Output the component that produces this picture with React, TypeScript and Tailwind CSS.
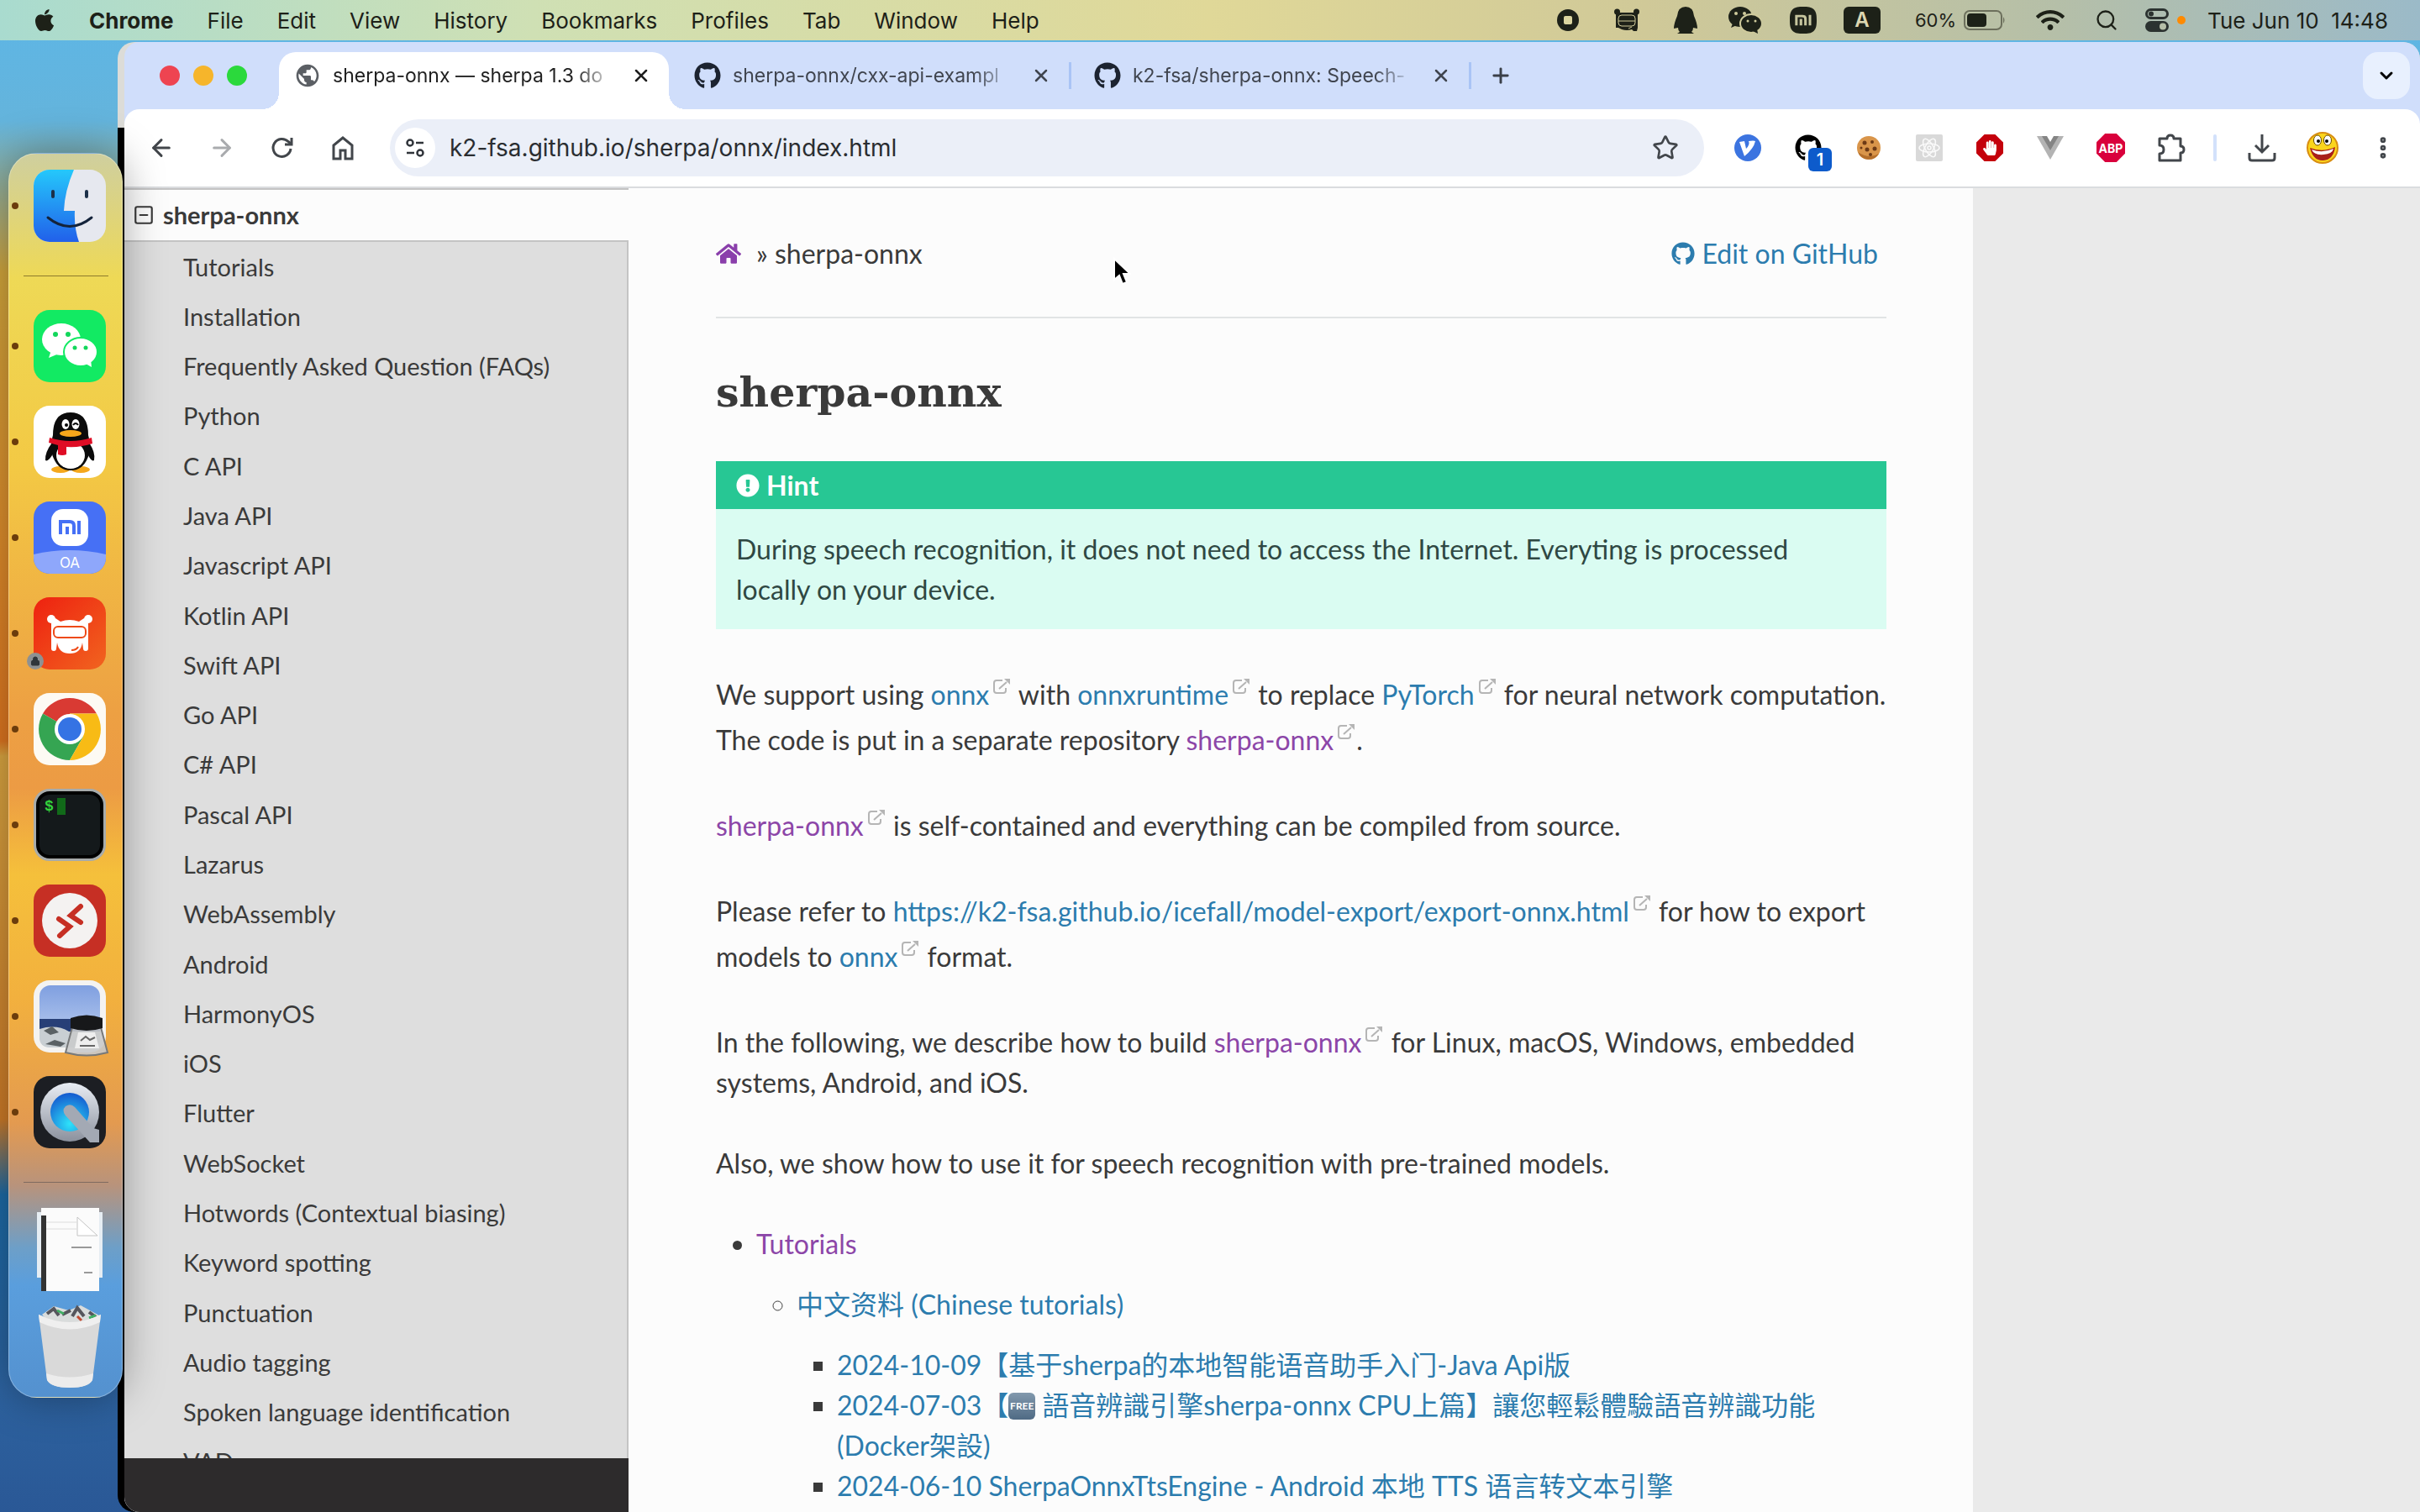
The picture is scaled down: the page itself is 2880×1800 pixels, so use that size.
import type { ReactNode } from "react";
import {
    FaApple,
    FaExclamationCircle,
    FaGithub,
    FaHandPaper,
    FaHome,
    FaWifi,
} from "react-icons/fa";
import { MdPublic } from "react-icons/md";
import { SiXiaomi } from "react-icons/si";
import {
    ArrowLeft,
    ArrowRight,
    ChevronDown,
    EllipsisVertical,
    House,
    Lock,
    Plus,
    Search,
    SquareMinus,
    Star,
    X,
} from "lucide-react";

const menus = ["File", "Edit", "View", "History", "Bookmarks", "Profiles", "Tab", "Window", "Help"];

const sections = [
    "Tutorials",
    "Installation",
    "Frequently Asked Question (FAQs)",
    "Python",
    "C API",
    "Java API",
    "Javascript API",
    "Kotlin API",
    "Swift API",
    "Go API",
    "C# API",
    "Pascal API",
    "Lazarus",
    "WebAssembly",
    "Android",
    "HarmonyOS",
    "iOS",
    "Flutter",
    "WebSocket",
    "Hotwords (Contextual biasing)",
    "Keyword spotting",
    "Punctuation",
    "Audio tagging",
    "Spoken language identification",
    "VAD",
];

const StatusCell = ({ children }: { children: ReactNode }) => (
    <span className="flex w-[70px] justify-center">{children}</span>
);

const MenuBar = () => (
    <header className="flex h-12 shrink-0 items-center bg-[linear-gradient(90deg,#a9dbcf_0%,#cfe0b4_22%,#e0d898_50%,#d0c998_68%,#b5bfa8_85%,#9bbac8_100%)] pl-[38px] pr-[38px] text-[26px] text-[#1d2118]">
        <FaApple className="mr-[38px] size-[30px]" />
        <nav className="flex gap-10">
            <button className="font-bold">Chrome</button>
            {menus.map((menu) => (
                <button key={menu}>{menu}</button>
            ))}
        </nav>
        <div className="ml-auto flex items-center">
            <StatusCell>
                <svg viewBox="0 0 26 26" className="size-[26px]">
                    <circle cx="13" cy="13" r="13" fill="#1d2118" />
                    <rect x="8" y="8" width="10" height="10" rx="2" fill="#dcd6a0" />
                </svg>
            </StatusCell>
            <StatusCell>
                <svg viewBox="0 0 30 28" className="h-7 w-[30px]">
                    <circle cx="3.500" cy="4" r="3.500" fill="#1d2118" />
                    <circle cx="26.500" cy="4" r="3.500" fill="#1d2118" />
                    <path d="M2 5h26v18l-1 4h-4l-2-2q-6 2-12 0l-4-2H2z" fill="#1d2118" />
                    <rect x="5" y="8" width="20" height="13" rx="4" fill="#1d2118" stroke="#cfca98" />
                    <path d="M5 15h20M17 24l4-2" stroke="#cfca98" />
                    <path d="M7 1q8 4 16 0v2H7z" fill="#d5cf98" />
                </svg>
            </StatusCell>
            <StatusCell>
                <svg viewBox="0 0 28 32" className="h-8 w-7">
                    <path d="M14 0q9 0 10 11 4 9 4 15l-5-1q0 3-2 5l3 2H4l3-2q-2-2-2-5l-5 1q0-6 4-15Q5 0 14 0z" fill="#1d2118" />
                </svg>
            </StatusCell>
            <StatusCell>
                <svg viewBox="0 0 40 32" className="h-8 w-10">
                    <ellipse cx="15" cy="12" rx="14" ry="12" fill="#1d2118" />
                    <path d="M6 20l-2 5 7-3z" fill="#1d2118" />
                    <ellipse cx="28" cy="20" rx="13" ry="11" fill="#1d2118" stroke="#cfca9c" strokeWidth="2" />
                    <path d="M30 29l6 3-1-6z" fill="#1d2118" />
                    <g fill="#cfca9c">
                        <circle cx="10" cy="8" r="2" />
                        <circle cx="20" cy="8" r="2" />
                        <circle cx="24" cy="17" r="1.500" />
                        <circle cx="33" cy="17" r="1.500" />
                    </g>
                </svg>
            </StatusCell>
            <StatusCell>
                <SiXiaomi className="size-8" />
            </StatusCell>
            <StatusCell>
                <span className="flex h-8 w-11 items-center justify-center rounded-md bg-[#1d2118] text-[24px] font-semibold text-[#dcd6b0]">A</span>
            </StatusCell>
            <span className="ml-7 mr-[9px] text-[22px]">60%</span>
            <svg viewBox="0 0 50 24" className="mr-9 h-6 w-[50px]">
                <rect x="1" y="1" width="44" height="22" rx="6" fill="none" stroke="#6c6f5c" strokeWidth="2" />
                <rect x="4" y="4" width="23" height="16" rx="4" fill="#1d2118" />
                <path d="M47 8q3 4 0 8z" fill="#6c6f5c" />
            </svg>
            <FaWifi className="mr-9 size-[34px]" />
            <Search className="mr-8 size-7" />
            <svg viewBox="0 0 28 28" className="mr-2.5 size-7">
                <rect x="1.500" y="1.500" width="25" height="10" rx="5" fill="none" stroke="#2b3230" strokeWidth="3" />
                <circle cx="7" cy="6.500" r="3" fill="#2b3230" />
                <rect x="0" y="15" width="28" height="13" rx="6.500" fill="#2b3230" />
                <circle cx="21" cy="21.500" r="4" fill="#b5bfa8" />
            </svg>
            <span className="mr-[26px] size-2.5 rounded-full bg-[#ff8a00]" />
            <time className="whitespace-pre">Tue Jun 10  14:48</time>
        </div>
    </header>
);

const FinderIcon = () => (
    <svg viewBox="0 0 86 86" className="size-full">
        <defs>
            <linearGradient id="finder" x1="0" y1="0" x2="0" y2="1">
                <stop offset="0" stopColor="#25c8fb" />
                <stop offset="1" stopColor="#2160ea" />
            </linearGradient>
            <clipPath id="tile">
                <rect width="86" height="86" rx="19" />
            </clipPath>
        </defs>
        <g clipPath="url(#tile)">
            <rect width="86" height="86" fill="#e6e8ef" />
            <path d="M0 0h48Q37 25 36 49h13q-1 20 5 37H0z" fill="url(#finder)" />
        </g>
        <path d="M23 26v6M63 26v6" stroke="#1c3049" strokeWidth="4" strokeLinecap="round" />
        <path d="M17 57q26 21 52 0" fill="none" stroke="#14233a" strokeWidth="3" strokeLinecap="round" />
    </svg>
);

const WeChatIcon = () => (
    <svg viewBox="0 0 86 86" className="size-full">
        <rect width="86" height="86" rx="19" fill="#12ea63" />
        <ellipse cx="33" cy="35" rx="23" ry="19" fill="#fff" />
        <path d="M21 48l-3 9 12-5z" fill="#fff" />
        <ellipse cx="56" cy="50" rx="20" ry="17" fill="#fff" stroke="#12ea63" strokeWidth="2" />
        <path d="M62 64l7 4-1-9z" fill="#fff" />
        <g fill="#12d75b">
            <circle cx="26" cy="29" r="3" />
            <circle cx="41" cy="29" r="3" />
            <circle cx="49" cy="45" r="2.500" />
            <circle cx="62" cy="45" r="2.500" />
        </g>
    </svg>
);

const QQIcon = () => (
    <svg viewBox="0 0 86 86" className="size-full">
        <rect width="86" height="86" rx="19" fill="#fff" />
        <ellipse cx="32" cy="76" rx="11" ry="4" fill="#f5a81c" />
        <ellipse cx="56" cy="76" rx="11" ry="4" fill="#f5a81c" />
        <path d="M22 44Q13 56 14 65q3 2 8-6zM66 44q8 12 6 21-3 2-7-6z" fill="#0b0b0b" />
        <path d="M44 8q21 0 21 27 5 16-1 28-6 14-20 14T24 63q-6-12-1-28Q23 8 44 8z" fill="#0b0b0b" />
        <ellipse cx="44" cy="59" rx="17" ry="16" fill="#fff" />
        <ellipse cx="38" cy="22" rx="4.500" ry="6" fill="#fff" />
        <ellipse cx="50" cy="22" rx="4.500" ry="6" fill="#fff" />
        <circle cx="39" cy="23" r="2" />
        <path d="M47 23q3-4 6 0" fill="none" stroke="#0b0b0b" strokeWidth="2" />
        <ellipse cx="44" cy="33" rx="13" ry="4" fill="#f7a71b" />
        <path d="M19 38q25 8 50 0l1 7q-14 5-31 4v9q-5 2-10 0v-11l-11-3z" fill="#df0d25" />
    </svg>
);

const MiOfficeIcon = () => (
    <span className="relative flex size-full flex-col items-center overflow-hidden rounded-[19px] bg-[#4670f5] pt-[9px]">
        <svg viewBox="0 0 86 28" className="absolute inset-x-0 bottom-0">
            <path d="M0 5q43-10 86 0v23H0z" fill="#8ea7fb" />
        </svg>
        <svg viewBox="0 0 44 44" className="size-[44px] shrink-0">
            <rect width="44" height="44" rx="14" fill="#fff" />
            <path d="M11 30V15h11q5 0 5 5v10M19 21v9M33 14v16" fill="none" stroke="#4670f5" strokeWidth="4" />
        </svg>
        <span className="relative mt-3 text-[17px] leading-4 text-white">OA</span>
    </span>
);

const MituIcon = () => (
    <svg viewBox="0 0 86 86" className="size-full">
        <defs>
            <linearGradient id="mitu" x1="0" y1="0" x2="1" y2="1">
                <stop offset="0" stopColor="#ee2110" />
                <stop offset="1" stopColor="#f1641f" />
            </linearGradient>
        </defs>
        <rect width="86" height="86" rx="19" fill="url(#mitu)" />
        <circle cx="21" cy="26" r="5" fill="#fff" />
        <circle cx="65" cy="26" r="5" fill="#fff" />
        <path d="M21 31l5-6 6 4q11-4 22 0l6-4 5 6v30q0 3-3 3t-3-3l-1-7q-2 13-15 13T28 54l-1 7q0 3-3 3t-3-3z" fill="#fff" />
        <rect x="24" y="35" width="38" height="13" rx="5" fill="#fff" stroke="#ee4a17" strokeWidth="2" />
        <path d="M45 63q6 0 8-4" fill="none" stroke="#ee4a17" strokeWidth="2" />
    </svg>
);

const ChromeIcon = () => (
    <svg viewBox="0 0 86 86" className="size-full">
        <rect width="86" height="86" rx="19" fill="#fdfaf3" />
        <path d="M43 43L11 24.500A37 37 0 0 1 75 24.500H43z" fill="#d93a33" />
        <path d="M43 43L11 24.500A37 37 0 0 0 43 80L59 52z" fill="#35a552" />
        <path d="M43 43l16 9L43 80A37 37 0 0 0 75 24.500H43z" fill="#f8bb15" />
        <circle cx="43" cy="43" r="18" fill="#fff" />
        <circle cx="43" cy="43" r="14" fill="#3573e4" />
    </svg>
);

const TerminalIcon = () => (
    <span className="flex size-full gap-1 rounded-[19px] border-[3px] border-[#a7abab] bg-[#14191b] pl-2.5 pt-2 font-['Liberation_Mono',monospace] text-[18px] font-bold leading-5 text-[#33d33c] shadow-[inset_0_0_0_4px_#000]">
        $<span className="h-5 w-2.5 bg-[#116a19]" />
    </span>
);

const RemoteIcon = () => (
    <svg viewBox="0 0 86 86" className="size-full">
        <rect width="86" height="86" rx="19" fill="#c62f24" />
        <circle cx="43" cy="43" r="33" fill="#f4f2f1" />
        <path d="M30 41l13 9-12 11M56 26L44 37l12 8" fill="none" stroke="#c62f24" strokeWidth="6" strokeLinecap="round" />
    </svg>
);

const PreviewIcon = () => (
    <svg viewBox="0 0 86 86" className="size-full overflow-visible">
        <defs>
            <linearGradient id="sky" x1="0" y1="0" x2="0" y2="1">
                <stop offset="0" stopColor="#7f9fe0" />
                <stop offset="1" stopColor="#c3d4f2" />
            </linearGradient>
        </defs>
        <rect width="86" height="86" rx="19" fill="#f4f3f1" />
        <rect x="7" y="6" width="72" height="74" rx="13" fill="url(#sky)" />
        <path d="M7 46h72v15H7z" fill="#273f77" />
        <path d="M7 58q20-6 35 3h37v8q0 11-13 11H20Q7 80 7 68z" fill="#c9cfd3" />
        <path d="M12 60l10-5 8 7-10 3zM14 76l11-5 13 4-6 4z" fill="#5a6164" />
        <path d="M46 56l-8 30q25 7 50 0l-8-30z" fill="#c9cacb" fillOpacity="0.900" stroke="#77797a" strokeWidth="2" />
        <path d="M53 62h20l5 19H49z" fill="#eee" />
        <path d="M56 72l6-5 5 4 6-3M55 78h18" stroke="#666" strokeWidth="2" fill="none" />
        <path d="M44 45q19-7 38 0v12q-19 6-38 0z" fill="#17181a" />
    </svg>
);

const QuickTimeIcon = () => (
    <svg viewBox="0 0 86 86" className="size-full">
        <defs>
            <linearGradient id="ring" x1="0" y1="0" x2="0" y2="1">
                <stop offset="0" stopColor="#e9edf4" />
                <stop offset="1" stopColor="#8b919d" />
            </linearGradient>
            <radialGradient id="glow" cx="0.500" cy="0.800" r="0.800">
                <stop offset="0" stopColor="#2ee3fa" />
                <stop offset="1" stopColor="#1459cf" />
            </radialGradient>
        </defs>
        <rect width="86" height="86" rx="19" fill="#1c1e23" />
        <circle cx="43" cy="43" r="35" fill="url(#ring)" />
        <circle cx="43" cy="43" r="23" fill="url(#glow)" />
        <path d="M38 36q6-4 11 1l22 25 7 2v15H67L38 47q-5-6 0-11z" fill="#a3a9b4" />
    </svg>
);

const DocumentsIcon = () => (
    <svg viewBox="0 0 86 100" className="h-[100px] w-[86px]">
        <path d="M4 6h78v78H4z" fill="#e6edf3" />
        <path d="M9 1h69v99H9z" fill="#fbfbfb" />
        <path d="M9 10h6v90H9z" fill="#333" />
        <path d="M52 12v22h24z" fill="#fff" stroke="#c4c4c4" />
        <path d="M15 18h36M15 26h36" stroke="#dcdcdc" />
        <path d="M45 48h24M60 78h10" stroke="#9a9a9a" strokeWidth="2" />
    </svg>
);

const TrashIcon = () => (
    <svg viewBox="0 0 86 100" className="h-[100px] w-[86px]">
        <path d="M10 12l14-10 18 5 14-6 22 12-10 10H20z" fill="#d9dcdc" />
        <path d="M16 11l8-6 6 8M34 12l10-5M46 14l6-10 8 10M66 9l8 6" stroke="#55555c" strokeWidth="4" fill="none" />
        <path d="M28 7l8 4M66 16l8-3" stroke="#3fae63" strokeWidth="3" />
        <path d="M52 14l5 5" stroke="#c24a31" strokeWidth="3" />
        <path d="M6 12q37 18 74 0l-10 78q-5 9-27 9t-27-9z" fill="#d9d9d9" />
        <path d="M6 12q37 18 74 0l-1 9q-36 17-72 0z" fill="#efefef" />
        <path d="M15 82q28 9 56 0l-1 8q-5 9-27 9t-27-9z" fill="#ececec" />
    </svg>
);

const dockApps = [
    { name: "WeChat", icon: <WeChatIcon /> },
    { name: "QQ", icon: <QQIcon /> },
    { name: "Mi Office", icon: <MiOfficeIcon /> },
    { name: "Mitu", icon: <MituIcon />, locked: true },
    { name: "Chrome", icon: <ChromeIcon /> },
    { name: "Terminal", icon: <TerminalIcon /> },
    { name: "Remote Desktop", icon: <RemoteIcon /> },
    { name: "Preview", icon: <PreviewIcon /> },
    { name: "QuickTime", icon: <QuickTimeIcon /> },
];

const DockApp = ({ name, icon, locked }: { name: string; icon: ReactNode; locked?: boolean }) => (
    <button aria-label={name} className="flex items-center gap-[18px]">
        <span className="size-2 rounded-full bg-[#6b3c0c]" />
        <span className="relative size-[86px]">
            {icon}
            {locked && (
                <span className="absolute -left-2 bottom-0 flex size-5 items-center justify-center rounded-full bg-[#8e9192] text-[#30363a]">
                    <Lock className="size-3" fill="currentColor" />
                </span>
            )}
        </span>
    </button>
);

const Dock = () => (
    <aside className="relative z-10 ml-2.5 mt-[134px] flex h-[1482px] w-[136px] flex-col items-start rounded-[34px] border border-white/30 bg-[linear-gradient(180deg,#cfcf9f_0%,#eed956_10%,#f3c944_25%,#eda043_45%,#ec9b44_51%,#f5c03b_58%,#f2b03e_68%,#e39a50_78%,#b8937c_83%,#6d9fc8_88%,#5a9edd_91%,#5491cf_100%)] pl-[3px] pt-[19px] shadow-[0_0_50px_rgba(0,0,0,0.35)]">
        <DockApp name="Finder" icon={<FinderIcon />} />
        <hr className="my-10 ml-3.5 w-[101px] border-[#8d7b2c]" />
        <div className="flex flex-col gap-7">
            {dockApps.map((app) => (
                <DockApp key={app.name} {...app} />
            ))}
        </div>
        <hr className="my-10 ml-3.5 mb-[29px] w-[101px] border-[#7f6b60]" />
        <button aria-label="Documents" className="ml-[26px]">
            <DocumentsIcon />
        </button>
        <button aria-label="Trash" className="ml-[26px] mt-4">
            <TrashIcon />
        </button>
    </aside>
);

const Tab = ({ title, icon, active }: { title: string; icon: ReactNode; active?: boolean }) => (
    <div
        className={
            active
                ? "relative flex h-[68px] w-[464px] items-center rounded-t-[20px] bg-white pb-3 pl-[18px] pr-[21px] text-[#1f1f1f]"
                : "flex h-[68px] w-[464px] items-center pb-3 pl-[18px] pr-[21px] text-[#40454f]"
        }
    >
        {active && (
            <>
                <span className="absolute -left-5 bottom-0 size-5 bg-[radial-gradient(circle_at_0_0,transparent_20px,white_20px)]" />
                <span className="absolute -right-5 bottom-0 size-5 bg-[radial-gradient(circle_at_100%_0,transparent_20px,white_20px)]" />
            </>
        )}
        <span className="mr-3.5 size-8">{icon}</span>
        <span className="min-w-0 flex-1 whitespace-nowrap [mask-image:linear-gradient(90deg,black_86%,transparent_100%)]">
            {title}
        </span>
        <button aria-label="Close tab" className="ml-5">
            <X className="size-6" strokeWidth={2.5} />
        </button>
    </div>
);

const TabStrip = () => (
    <div className="flex h-20 items-end text-[23px]">
        <div className="flex gap-4 self-center pl-[42px] pr-[38px]">
            <button aria-label="Close" className="size-6 rounded-full bg-[#ee4451]" />
            <button aria-label="Minimize" className="size-6 rounded-full bg-[#f6b52b]" />
            <button aria-label="Zoom" className="size-6 rounded-full bg-[#2bd93c]" />
        </div>
        <Tab active title="sherpa-onnx — sherpa 1.3 do" icon={<MdPublic className="size-8 text-[#5b5f64]" />} />
        <span className="w-3" />
        <Tab title="sherpa-onnx/cxx-api-exampl" icon={<FaGithub className="size-8 text-[#1c2330]" />} />
        <span className="mb-6 h-8 w-3 border-l-[3px] border-[#a9c4f5]" />
        <Tab title="k2-fsa/sherpa-onnx: Speech-" icon={<FaGithub className="size-8 text-[#1c2330]" />} />
        <span className="mb-6 h-8 w-6 border-l-[3px] border-[#a9c4f5]" />
        <button aria-label="New tab" className="mb-[26px] text-[#3a3f48]">
            <Plus className="size-7" strokeWidth={2.5} />
        </button>
        <button aria-label="Search tabs" className="mb-3 ml-auto mr-3 flex size-14 items-center justify-center rounded-[18px] bg-[#e8f0fe]">
            <ChevronDown className="size-6" strokeWidth={3} />
        </button>
    </div>
);

const ToolButton = ({ label, children }: { label: string; children: ReactNode }) => (
    <button aria-label={label} className="flex w-[72px] shrink-0 justify-center text-[#42464b]">
        {children}
    </button>
);

const Toolbar = () => (
    <div className="flex h-[94px] items-center rounded-t-[18px] border-b-2 border-[#dadcdf] bg-white px-2">
        <ToolButton label="Back">
            <ArrowLeft className="size-8" strokeWidth={2.25} />
        </ToolButton>
        <ToolButton label="Forward">
            <ArrowRight className="size-8 text-[#a9abae]" strokeWidth={2.25} />
        </ToolButton>
        <ToolButton label="Reload">
            <svg viewBox="0 0 28 28" className="size-7" fill="none" stroke="currentColor" strokeWidth="3">
                <path d="M24 15a10.500 10.500 0 1 1-3-8.500L24 9" />
                <path d="M25 2v8h-8" />
            </svg>
        </ToolButton>
        <ToolButton label="Home">
            <svg viewBox="0 0 28 30" className="h-[30px] w-7" fill="none" stroke="currentColor" strokeWidth="3">
                <path d="M3 28V12l11-9 11 9v16h-8V18h-6v10z" />
            </svg>
        </ToolButton>
        <form className="ml-5 mr-4 flex h-[68px] flex-1 items-center rounded-full bg-[#ebeff8] pl-1.5">
            <button type="button" aria-label="Site information" className="mr-[17px] flex size-12 items-center justify-center rounded-full bg-white">
                <svg viewBox="0 0 24 24" className="size-6" fill="none" stroke="#30343a" strokeWidth="2.500">
                    <circle cx="6" cy="6" r="3.500" />
                    <path d="M13 6h9M2 18h9" />
                    <circle cx="18" cy="18" r="3.500" />
                </svg>
            </button>
            <input
                aria-label="Address"
                defaultValue="k2-fsa.github.io/sherpa/onnx/index.html"
                className="min-w-0 flex-1 bg-transparent text-[28px] text-[#2a2d31] outline-none"
            />
            <button type="button" aria-label="Bookmark" className="mr-[30px] text-[#42464b]">
                <Star className="size-8" />
            </button>
        </form>
        <ToolButton label="V extension">
            <svg viewBox="0 0 32 32" className="size-8">
                <circle cx="16" cy="16" r="16" fill="#3c74e0" />
                <path d="M6 9l6-1 2 9q5-5 3-9 6-1 8 0-2 9-13 18z" fill="#fff" />
            </svg>
        </ToolButton>
        <ToolButton label="GitHub notifications">
            <span className="relative">
                <FaGithub className="size-8 text-black" />
                <span className="absolute -bottom-3 -right-3 flex size-7 items-center justify-center rounded-md bg-[#0d5bcb] text-[20px] font-semibold text-white">
                    1
                </span>
            </span>
        </ToolButton>
        <ToolButton label="Cookies">
            <svg viewBox="0 0 30 30" className="size-[30px]">
                <circle cx="15" cy="15" r="14" fill="#d9954a" />
                <path d="M2 20a14 14 0 0 0 25 2q-12 7-25-2z" fill="#b56f2b" />
                <g fill="#6c3a16">
                    <circle cx="10" cy="9" r="2.500" />
                    <circle cx="19" cy="8" r="2" />
                    <circle cx="22" cy="16" r="2.500" />
                    <circle cx="13" cy="17" r="2.500" />
                    <circle cx="6" cy="15" r="1.500" />
                    <circle cx="17" cy="23" r="2" />
                </g>
            </svg>
        </ToolButton>
        <ToolButton label="React tools">
            <svg viewBox="0 0 32 32" className="size-8" fill="none" stroke="#fafafa" strokeWidth="1.500">
                <rect width="32" height="32" rx="2" fill="#d9d9d9" stroke="none" />
                <ellipse cx="16" cy="16" rx="12" ry="5" />
                <ellipse cx="16" cy="16" rx="12" ry="5" transform="rotate(60 16 16)" />
                <ellipse cx="16" cy="16" rx="12" ry="5" transform="rotate(120 16 16)" />
                <circle cx="16" cy="16" r="2" />
            </svg>
        </ToolButton>
        <ToolButton label="AdBlock">
            <span className="flex size-8 items-center justify-center bg-[#c4000c] [clip-path:polygon(30%_0,70%_0,100%_30%,100%_70%,70%_100%,30%_100%,0_70%,0_30%)]">
                <FaHandPaper className="size-[18px] text-white" />
            </span>
        </ToolButton>
        <ToolButton label="Vue tools">
            <svg viewBox="0 0 32 28" className="h-7 w-8">
                <path d="M0 0h32L16 28z" fill="#b3b3b3" />
                <path d="M6 0h20L16 17z" fill="#848484" />
                <path d="M12 0h8l-4 7z" fill="#fff" />
            </svg>
        </ToolButton>
        <ToolButton label="Adblock Plus">
            <span className="flex size-[34px] items-center justify-center bg-[#d9003c] text-[14px] font-bold text-white [clip-path:polygon(30%_0,70%_0,100%_30%,100%_70%,70%_100%,30%_100%,0_70%,0_30%)]">
                ABP
            </span>
        </ToolButton>
        <ToolButton label="Extensions">
            <svg viewBox="0 0 34 34" className="size-[34px]" fill="none" stroke="currentColor" strokeWidth="3">
                <path d="M3 6h9q0-4 4-4t4 4h8v9q4 0 4 4t-4 4v9H3v-8q5 0 5-5t-5-5z" strokeLinejoin="round" />
            </svg>
        </ToolButton>
        <span className="ml-3.5 mr-[18px] h-8 w-1 rounded-full bg-[#d3e1fb]" />
        <ToolButton label="Downloads">
            <svg viewBox="0 0 34 34" className="size-[34px]" fill="none" stroke="currentColor" strokeWidth="3">
                <path d="M17 1v21M9 14l8 8 8-8M2 23v6q0 3 3 3h24q3 0 3-3v-6" />
            </svg>
        </ToolButton>
        <ToolButton label="Profile">
            <svg viewBox="0 0 40 40" className="size-10">
                <circle cx="20" cy="20" r="18" fill="#fbd51c" stroke="#d98e12" strokeWidth="2" />
                <ellipse cx="14" cy="11" rx="4.500" ry="6" fill="#fff" stroke="#6b4a00" />
                <ellipse cx="26" cy="11" rx="4.500" ry="6" fill="#fff" stroke="#6b4a00" />
                <circle cx="15" cy="12" r="2" />
                <circle cx="25" cy="12" r="2" />
                <path d="M5 20q15 6 30-1-2 15-14 16T5 20z" fill="#a8201b" />
                <path d="M7 22q13 5 26-1-1 6-12 7T7 22z" fill="#fff" />
            </svg>
        </ToolButton>
        <ToolButton label="Menu">
            <EllipsisVertical className="size-8" strokeWidth={3} />
        </ToolButton>
    </div>
);

const Sidebar = () => (
    <nav className="flex w-[600px] shrink-0 flex-col bg-[#2d2b2c] text-[29px] leading-9 text-[#3a3a3a]">
        <a href="#top" className="flex h-16 shrink-0 items-center gap-2.5 border-y-2 border-[#c4c4c4] bg-[#fcfcfc] pl-2.5 font-bold">
            <SquareMinus className="size-[26px]" />
            sherpa-onnx
        </a>
        <div className="mb-16 min-h-0 flex-1 overflow-hidden border-r-2 border-[#c4c4c4] bg-[#dedede]">
            <ul className="grid h-[calc(100%+34px)] auto-rows-fr">
                {sections.map((section) => (
                    <li key={section} className="flex items-center pl-[70px]">
                        <a href="#section">{section}</a>
                    </li>
                ))}
            </ul>
        </div>
    </nav>
);

const Ext = ({ children, visited }: { children: ReactNode; visited?: boolean }) => (
    <>
        <a href="#external" className={visited ? "text-[#8c46a8]" : "text-[#2c7cae]"}>
            {children}
        </a>
        <svg viewBox="0 0 20 18" className="mb-[13px] ml-[5px] mr-0.5 mt-[11px] inline h-[18px] w-5 align-baseline" fill="none" stroke="#b5b5b5" strokeWidth="2">
            <path d="M11 2H4Q1 2 1 5v9q0 3 3 3h8q3 0 3-3v-3M7 12l9-8" />
            <path d="M13 0h7v7z" fill="#b5b5b5" stroke="none" />
        </svg>
    </>
);

const Article = () => (
    <main className="w-[1600px] shrink-0 bg-[#fcfcfc] pl-[104px] pr-[103px] pt-[54px]">
        <div className="flex items-center border-b-2 border-[#e1e4e5] pb-[51px]">
            <a href="#home" aria-label="Home" className="mr-[18px] text-[#8a3fab]">
                <FaHome className="size-[30px]" />
            </a>
            <span>» sherpa-onnx</span>
            <a href="#edit" className="ml-auto flex items-center gap-2 pr-2.5 text-[#2c7cae]">
                <FaGithub className="size-7" />
                Edit on GitHub
            </a>
        </div>
        <h1 className="mb-[44px] mt-[50px] font-['DejaVu_Serif',serif] text-[49px] font-bold leading-[76px]">sherpa-onnx</h1>
        <section className="bg-[#dafcf2] text-[#2f4843]">
            <p className="flex h-[57px] items-center gap-2 bg-[#27c794] px-6 font-bold text-white">
                <FaExclamationCircle className="size-7" />
                Hint
            </p>
            <p className="px-6 pb-[23px] pt-6">
                During speech recognition, it does not need to access the Internet. Everyting is processed locally on your device.
            </p>
        </section>
        <p className="mt-12">
            We support using <Ext>onnx</Ext> with <Ext>onnxruntime</Ext> to replace <Ext>PyTorch</Ext> for neural network computation.
            The code is put in a separate repository <Ext visited>sherpa-onnx</Ext>.
        </p>
        <p className="mt-12">
            <Ext visited>sherpa-onnx</Ext> is self-contained and everything can be compiled from source.
        </p>
        <p className="mt-12">
            Please refer to <Ext>https://k2-fsa.github.io/icefall/model-export/export-onnx.html</Ext> for how to export models to{" "}
            <Ext>onnx</Ext> format.
        </p>
        <p className="mt-12">
            In the following, we describe how to build <Ext visited>sherpa-onnx</Ext> for Linux, macOS, Windows, embedded systems,
            Android, and iOS.
        </p>
        <p className="my-12">Also, we show how to use it for speech recognition with pre-trained models.</p>
        <ul className="ml-12 list-disc">
            <li>
                <a href="#tutorials" className="text-[#8c46a8]">
                    Tutorials
                </a>
                <ul className="ml-12 mt-6 list-[circle]">
                    <li>
                        <a href="#chinese" className="text-[#2c7cae]">
                            中文资料 (Chinese tutorials)
                        </a>
                        <ul className="ml-12 mt-6 list-[square]">
                            <li>
                                <a href="#java" className="text-[#2c7cae]">
                                    2024-10-09【基于sherpa的本地智能语音助手入门-Java Api版
                                </a>
                            </li>
                            <li>
                                <a href="#docker" className="text-[#2c7cae]">
                                    2024-07-03【
                                    <span className="mb-1.5 mr-2 inline-flex h-8 w-8 items-center justify-center rounded-md bg-[linear-gradient(180deg,#8299ad,#4f6a84)] align-middle text-[12px] font-bold leading-4 text-white">
                                        FREE
                                    </span>
                                    語音辨識引擎sherpa-onnx CPU上篇】讓您輕鬆體驗語音辨識功能(Docker架設)
                                </a>
                            </li>
                            <li>
                                <a href="#tts" className="text-[#2c7cae]">
                                    2024-06-10 SherpaOnnxTtsEngine - Android 本地 TTS 语言转文本引擎
                                </a>
                            </li>
                        </ul>
                    </li>
                </ul>
            </li>
        </ul>
    </main>
);

const App = () => (
    <div className="flex h-screen flex-col overflow-hidden bg-[linear-gradient(180deg,#5db6e6_0%,#64b4dc_8%,#d2a63c_18%,#de8c2b_36%,#dd7520_49%,#d9a541_50%,#cc7a28_74%,#1c6aa6_79%,#2d629f_92%,#2a5896_100%)] font-['Inter',sans-serif]">
        <MenuBar />
        <div className="flex min-h-0 flex-1">
            <div className="w-[140px] shrink-0">
                <Dock />
            </div>
            {/* edge of the window behind */}
            <div className="mt-0.5 flex min-w-0 flex-1 flex-col overflow-hidden rounded-l-[20px] rounded-tr-[20px] bg-[linear-gradient(180deg,#dcdcd8_0,#dcdcd8_102px,#000_102px)] pl-2">
                <div className="flex min-h-0 flex-1 flex-col overflow-hidden rounded-l-[18px] rounded-tr-[20px] bg-[#d0defb]">
                    <TabStrip />
                    <Toolbar />
                    <div className="flex min-h-0 flex-1 overflow-hidden bg-[#eaeaea] font-['Lato','Noto_Sans_CJK_SC',sans-serif] text-[32px] leading-[48px] text-[#3a3a3a]">
                        <Sidebar />
                        <Article />
                    </div>
                </div>
            </div>
        </div>
        <svg viewBox="0 0 22 34" className="absolute left-[1324px] top-[306px] z-20 h-[34px] w-[22px]">
            <path d="M2 2v25l6-5 4 10 5-2-4-10h8z" fill="#000" stroke="#fff" strokeWidth="2" />
        </svg>
    </div>
);

export default App;
